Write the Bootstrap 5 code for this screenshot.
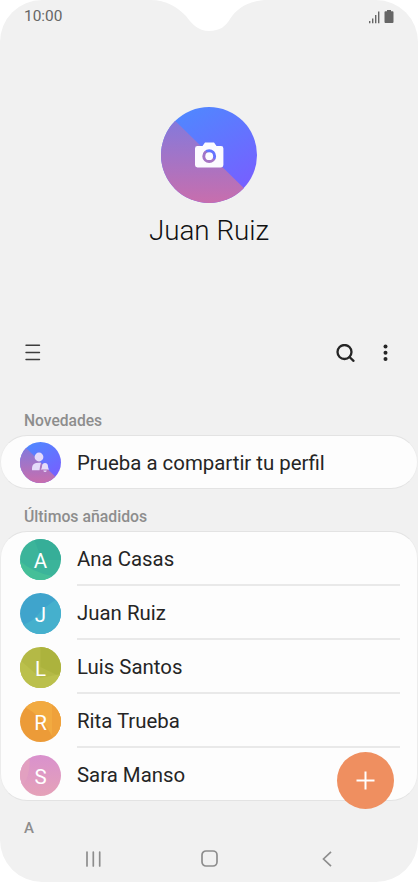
<!DOCTYPE html>
<html lang="es">
<head>
<meta charset="utf-8">
<meta name="viewport" content="width=device-width, initial-scale=1">
<title>Contactos</title>
<link href="https://cdn.jsdelivr.net/npm/bootstrap@5.3.0/dist/css/bootstrap.min.css" rel="stylesheet">
<style>
body{font-family:Roboto,sans-serif;background:#fff;color:#252525}
svg{display:block;flex-shrink:0}
.phone{width:418px;height:882px;background:#f1f1f1;border-radius:42px}
.phone>*{flex-shrink:0}
.notch{left:150px;top:0}
.status{height:33px;padding:0 24px 0 24px;color:#666;font-size:15.4px}
.hero{height:288px;padding-top:74px}
.hero h1{font-size:27.8px;font-weight:300;line-height:34px;margin:11px 0 0;color:#111}
.tools{height:64px;padding:0 29px 0 25px}
.section-title{font-size:15.6px;font-weight:500;line-height:20px;color:#8d8d8d;padding-left:24px;margin:0}
.news{padding-top:2px;margin-top:24px}
.recent{font-size:15.8px;padding-top:2px;line-height:20px}
.letter{padding-top:4px;font-size:15px;line-height:14px}
.panel{background:#fdfdfd;border:1px solid #e3e3e3;border-left-color:#ececec;border-right-color:#ececec}
.panel-one{border-radius:27px;height:54px}
.panel-many{border-radius:27px;height:270px}
.entry{height:54px;padding-left:19px;font-size:20.4px;gap:16px;line-height:24px}
.panel-one .entry{height:53px}
.entry-name{height:54px;margin-right:17px}
.entry:not(:last-child) .entry-name{border-bottom:2px solid #e9e9e9;padding-top:2px}
.avatar{width:41px;height:41px}
.avatar text{font-size:20.5px;fill:#fff;text-anchor:middle;font-family:Roboto,sans-serif}
.fab{width:57px;height:57px;left:337px;top:752px;background:#ef8f60;border:0}
.navkeys{height:47px;padding:0 86px 0 86px}
.home-key{margin-right:4px}
</style>
<script src="https://cdn.jsdelivr.net/npm/bootstrap@5.3.0/dist/js/bootstrap.bundle.min.js"></script>
</head>
<body>
<main class="phone position-relative overflow-hidden d-flex flex-column">
  <svg class="notch position-absolute" width="118" height="32" viewBox="0 0 118 32"><path fill="#fff" d="M0 0C17 0 27 7 36 16C42 24 48 31 59 31C70 31 76 26 80 19C87 8 99 0 118 0Z"/></svg>
  <header class="status d-flex align-items-center justify-content-between">
    <span>10:00</span>
    <svg width="25" height="14" viewBox="0 0 25 14" fill="#666"><path d="M0 11h1.400v2.200H0zM3 8.400h1.400v4.800H3zM6 5h1.400v8.200H6zM9 1.500h1.400v11.700H9zM18 0h4v1.200h1.500q1 0 1 1v9.900q0 1-1 1h-7q-1 0-1-1V2.200q0-1 1-1H18z"/></svg>
  </header>

  <section class="hero d-flex flex-column align-items-center">
    <svg width="96" height="96" viewBox="0 0 96 96">
      <defs>
        <linearGradient id="blue" x1="0.25" y1="0" x2="0.8" y2="0.9"><stop stop-color="#4f88ff"/><stop offset="1" stop-color="#775fff"/></linearGradient>
        <linearGradient id="pink" x1="0" y1="0.15" x2="0" y2="1"><stop stop-color="#8579db"/><stop offset="1" stop-color="#c86ead"/></linearGradient>
        <clipPath id="round"><circle cx="48" cy="48" r="48"/></clipPath>
        <g id="duo" clip-path="url(#round)"><path fill="url(#blue)" d="M0 0H96V96H0Z"/><path fill="url(#pink)" d="M0 0L96 94V96H0Z"/></g>
      </defs>
      <use href="#duo"/>
      <path fill="#fbfaff" fill-rule="evenodd" d="M36.500 39H41.500L44 35.400H53L55.500 39H60Q62.400 39 62.400 41.400V58Q62.400 60.400 60 60.400H36.500Q34 60.400 34 58V41.400Q34 39 36.500 39ZM48.200 42.300a6.900 6.900 0 1 0 0 13.800a6.900 6.900 0 1 0 0-13.800Z"/>
      <circle cx="48.200" cy="49.200" r="3.900" fill="#fbfaff"/>
    </svg>
    <h1>Juan Ruiz</h1>
  </section>

  <div class="tools d-flex align-items-center justify-content-between">
    <svg width="16" height="18" viewBox="0 0 16 18" stroke="#3c3c3c" stroke-width="1.400" stroke-linecap="round"><path d="M1 1.300H14.500M1 8.500H14.500M1 15.500H14.500"/></svg>
    <div class="d-flex align-items-center">
      <svg width="19" height="19" viewBox="0 0 19 19" fill="none" stroke="#252525" stroke-width="2.300" stroke-linecap="round"><circle cx="8.500" cy="8" r="7"/><path d="M13.500 13L17.500 16.800"/></svg>
      <svg class="ms-4" width="10" height="18" viewBox="0 0 10 18" fill="#252525"><circle cx="6.500" cy="2.500" r="2"/><circle cx="6.500" cy="8.700" r="2"/><circle cx="6.500" cy="14.900" r="2"/></svg>
    </div>
  </div>

  <h2 class="section-title news">Novedades</h2>
  <div class="panel panel-one mt-1">
    <div class="entry d-flex align-items-center">
      <svg class="avatar" viewBox="0 0 41 41"><use href="#duo" transform="scale(.427)"/><g fill="#e5dbfa"><circle cx="19" cy="15" r="4.400"/><path d="M12 28.200V26Q12 20.800 19 20.800H21Q20 23.500 19.500 28.200ZM20.700 27.600Q22 26.500 22 24.500Q22 21 25 21T28 24.500Q28 26.500 29.300 27.600ZM23.300 28.600h3.500q-.4 1.500-1.750 1.500t-1.750-1.500Z"/></g></svg>
      <span>Prueba a compartir tu perfil</span>
    </div>
  </div>

  <h2 class="section-title recent mt-3">Últimos añadidos</h2>
  <div class="panel panel-many mt-1">
    <div class="entry d-flex align-items-center">
      <svg class="avatar" viewBox="0 0 41 41"><defs><clipPath id="c"><circle cx="20.500" cy="20.500" r="20.500"/></clipPath></defs><g clip-path="url(#c)"><path fill="#3bb49a" d="M0 0H41V41H0Z"/><path fill="#36ae98" d="M14 0H41V21H22Z"/><path fill="#45bf98" d="M0 22Q12 33 32 37L25 41H0Z"/></g><text x="20.500" y="28.500">A</text></svg>
      <div class="entry-name flex-grow-1 d-flex align-items-center">Ana Casas</div>
    </div>
    <div class="entry d-flex align-items-center">
      <svg class="avatar" viewBox="0 0 41 41"><g clip-path="url(#c)"><path fill="#3fa4cc" d="M0 0H41V41H0Z"/><path fill="#45b0cd" d="M41 4Q24 13 15 25Q8 31 0 32V41H41Z"/></g><text x="20.500" y="28.500">J</text></svg>
      <div class="entry-name flex-grow-1 d-flex align-items-center">Juan Ruiz</div>
    </div>
    <div class="entry d-flex align-items-center">
      <svg class="avatar" viewBox="0 0 41 41"><g clip-path="url(#c)"><path fill="#b4b946" d="M0 0H41V41H0Z"/><path fill="#acb33d" d="M20.500 0H41V30L20.500 20Z"/><path fill="#bbc04c" d="M0 13L20.500 31V41H0ZM20.500 31L41 27V41H20.500Z"/></g><text x="20.500" y="28.500">L</text></svg>
      <div class="entry-name flex-grow-1 d-flex align-items-center">Luis Santos</div>
    </div>
    <div class="entry d-flex align-items-center">
      <svg class="avatar" viewBox="0 0 41 41"><g clip-path="url(#c)"><path fill="#ec9b38" d="M0 0H41V41H0Z"/><path fill="#f2aa40" d="M5 6Q22 15 32 35H41V0H5Z"/><path fill="#efa13b" d="M32 0H41V41H32Z"/></g><text x="20.500" y="28.500">R</text></svg>
      <div class="entry-name flex-grow-1 d-flex align-items-center">Rita Trueba</div>
    </div>
    <div class="entry d-flex align-items-center">
      <svg class="avatar" viewBox="0 0 41 41"><defs><linearGradient id="rose" x1="0" y1="0" x2="0" y2="1"><stop stop-color="#d991cd"/><stop offset="1" stop-color="#e5a2b8"/></linearGradient></defs><g clip-path="url(#c)"><path fill="url(#rose)" d="M0 0H41V41H0Z"/><path fill="#e2a0c0" d="M0 0H9Q12 18 2 32H0Z"/></g><text x="20.500" y="28.500">S</text></svg>
      <div class="entry-name flex-grow-1 d-flex align-items-center">Sara Manso</div>
    </div>
  </div>

  <h2 class="section-title letter mt-3">A</h2>
  <button class="fab position-absolute rounded-circle d-flex align-items-center justify-content-center p-0" aria-label="Añadir contacto">
    <svg width="19" height="19" viewBox="0 0 19 19" stroke="#fff" stroke-width="2"><path d="M.5 9.500H18.500M9.500 .5V18.500"/></svg>
  </button>
  <nav class="navkeys mt-auto d-flex align-items-center justify-content-between">
    <svg width="15" height="16" viewBox="0 0 15 16" stroke="#8d8d8d" stroke-width="1.700" stroke-linecap="round"><path d="M1 1V15M7.300 1V15M13.700 1V15"/></svg>
    <svg class="home-key" width="17" height="17" viewBox="0 0 17 17" fill="none" stroke="#8d8d8d" stroke-width="1.700"><rect x="1" y="1" width="15" height="15" rx="4"/></svg>
    <svg width="10" height="16" viewBox="0 0 10 16" fill="none" stroke="#8d8d8d" stroke-width="1.700"><path d="M9 .8L1.500 8L9 15.200"/></svg>
  </nav>
</main>
</body>
</html>
